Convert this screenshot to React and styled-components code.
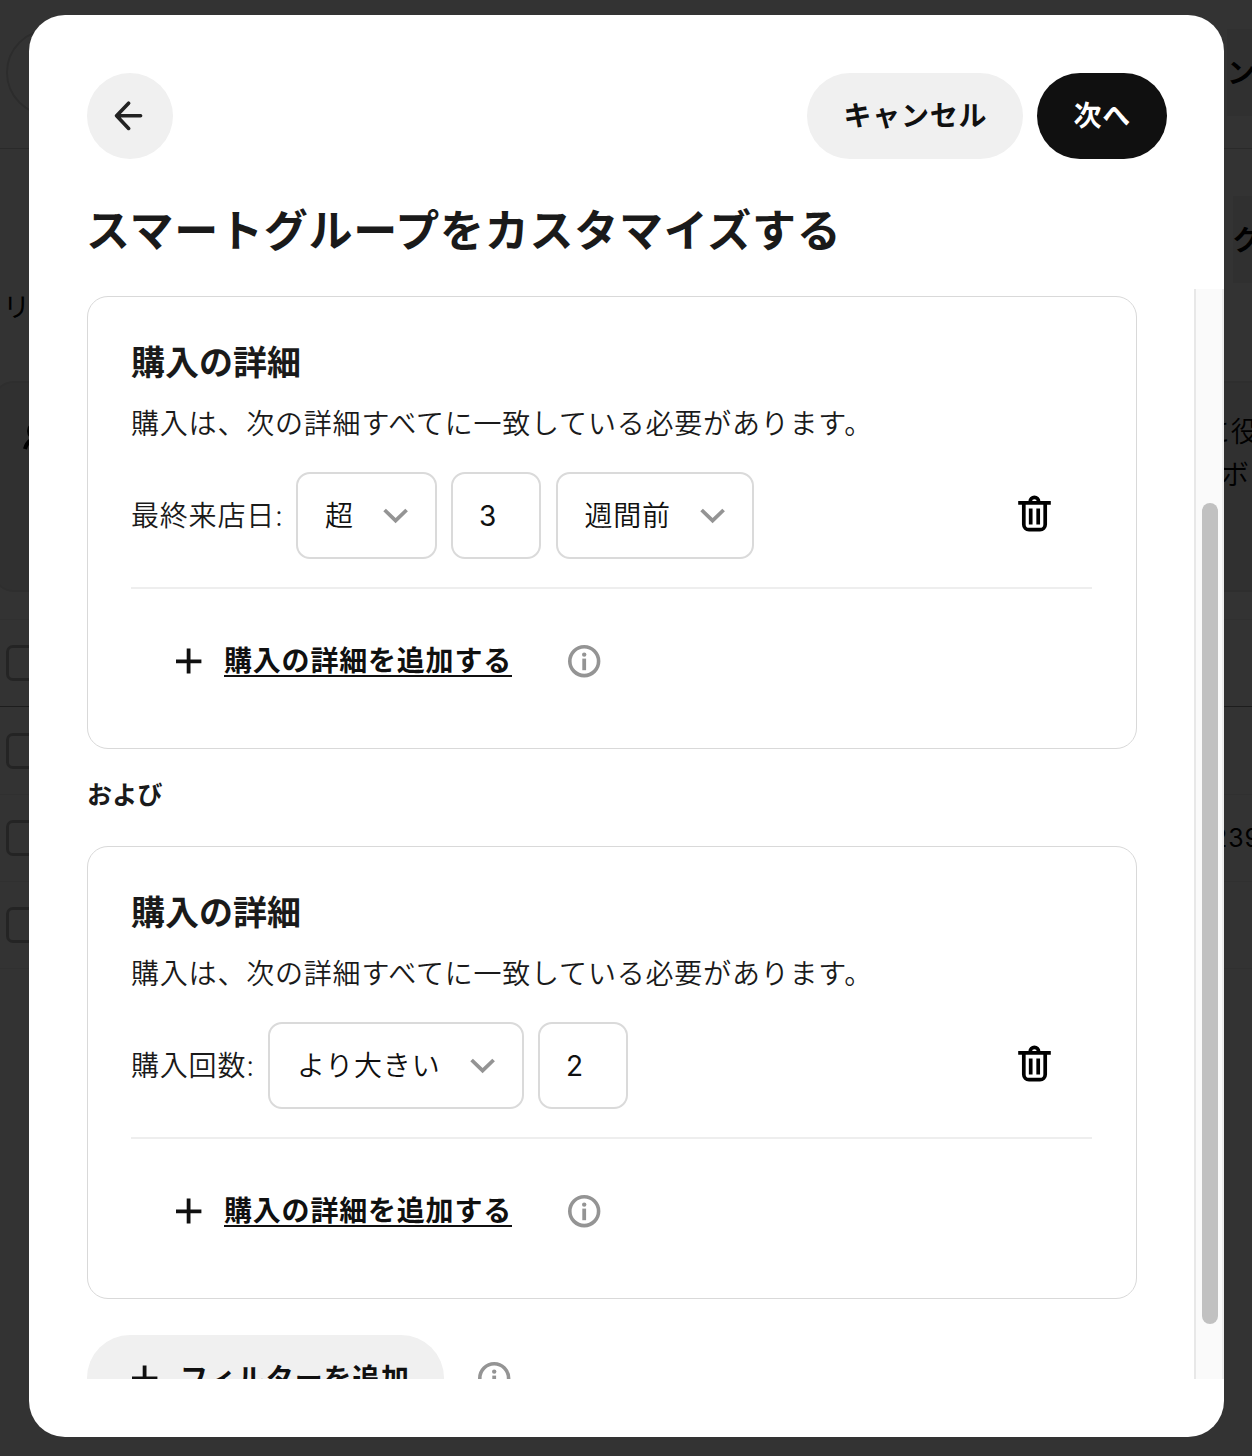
import styled, { createGlobalStyle } from 'styled-components'

const GlobalStyle = createGlobalStyle`
  * {
    box-sizing: border-box;
  }

  body {
    margin: 0;
    overflow: hidden;
    font-family: Inter, 'Noto Sans CJK JP', sans-serif;
    color: #1a1a1a;
  }

  button {
    border: 0;
    padding: 0;
    background: none;
    font: inherit;
    color: inherit;
  }
`

const Screen = styled.div`
  position: relative;
  width: 1252px;
  height: 1456px;
  overflow: hidden;
  background-color: #fff;
`

/* page behind the dialog */

const TopBar = styled.div`
  display: flex;
  align-items: center;
  justify-content: space-between;
  height: 149px;
  padding: 0 0 3px 6px;
  border-bottom: 1px solid #d0d0d0;
`

const RoundButton = styled.div`
  width: 87px;
  height: 87px;
  border: 2px solid #dadada;
  border-radius: 50%;
`

const EdgeButton = styled.div`
  display: flex;
  align-items: center;
  width: ${({ $width }) => $width}px;
  height: 87px;
  padding-bottom: 4px;
  overflow: hidden;
  background-color: #f0f0f0;
  font-size: 28px;
  font-weight: 700;
  white-space: nowrap;
  color: #000;
`

const ActionBar = styled.div`
  display: flex;
  justify-content: flex-end;
  padding: 47px 0 0;
`

const PageLabel = styled.div`
  margin: 3px 0 0 3px;
  font-size: 27px;
  line-height: 44px;
  color: #000;
`

const Banner = styled.div`
  display: flex;
  justify-content: space-between;
  height: 211px;
  margin: 51px -30px 0 -8px;
  padding: 28px 0 0 29px;
  border: 2px solid #e4e4e4;
  border-radius: 22px;
  background-color: #f0f0f0;
  color: #000;

  p {
    width: 78px;
    margin: 0;
    font-size: 28px;
    font-weight: 350;
    line-height: 43px;
    letter-spacing: 0.8px;
    white-space: nowrap;
  }

  span {
    display: block;
    padding-left: 19px;
  }
`

const PageRows = styled.div`
  margin-top: 27.4px;
  border-top: 1px solid #efefef;
`

const PageRow = styled.div`
  display: flex;
  align-items: center;
  justify-content: space-between;
  height: 87.1px;
  padding-left: 6px;
  border-bottom: 1px solid ${({ $head }) => ($head ? '#909090' : '#efefef')};

  span {
    width: 40px;
    font-size: 25px;
    letter-spacing: 0.9px;
    color: #000;
  }
`

const Checkbox = styled.div`
  width: 36px;
  height: 36px;
  border: 3px solid #b4b4b4;
  border-radius: 7px;
`

const Scrim = styled.div`
  position: absolute;
  inset: 0;
  background-color: rgba(0, 0, 0, 0.8);
`

/* dialog */

const Dialog = styled.section`
  position: absolute;
  top: 15px;
  left: 29px;
  display: flex;
  flex-direction: column;
  width: 1195px;
  height: 1422px;
  border-radius: 36px;
  overflow: hidden;
  background-color: #fff;
`

const Header = styled.header`
  padding: 58px 57px 0 58px;

  .actions {
    display: flex;
    gap: 14px;
  }

  h1 {
    margin: 39px 0 0 -1px;
    font-size: 44px;
    font-weight: 700;
    line-height: 66px;
    letter-spacing: 0.75px;
  }
`

const BackButton = styled.button`
  display: flex;
  align-items: center;
  justify-content: center;
  width: 86px;
  height: 86px;
  margin-right: auto;
  padding: 0 2px 1px 0;
  border-radius: 50%;
  background-color: #f0f0f0;
`

const Button = styled.button`
  display: flex;
  align-items: center;
  height: 86px;
  padding: 0 36px 4px;
  border-radius: 43px;
  background-color: ${({ $primary }) => ($primary ? '#101010' : '#f0f0f0')};
  font-size: 28px;
  font-weight: 700;
  letter-spacing: 0.8px;
  white-space: nowrap;
  color: ${({ $primary }) => ($primary ? '#fff' : '#101010')};
`

const FilterButton = styled(Button)`
  padding: 0 34px 3px 45px;

  svg {
    margin: 3px 22px 0 0;
  }
`

const Body = styled.div`
  display: flex;
  height: 1090px;
  margin-top: 25px;
  overflow: hidden;
`

const Content = styled.div`
  flex: 1;
  padding: 7px 57px 0 58px;
`

const ScrollTrack = styled.div`
  width: 30px;
  height: 1090px;
  padding: 214px 4px 0 6px;
  border-left: 2px solid #e8e8e8;
  border-right: 2px solid #ededed;
  background-color: #fafafa;
`

const ScrollThumb = styled.div`
  width: 16px;
  height: 821px;
  border-radius: 8px;
  background-color: #c1c1c1;
`

const Card = styled.article`
  height: 453px;
  padding: 44px 44px 0 43px;
  border: 1px solid #d9d9d9;
  border-radius: 21px;

  h2 {
    margin: 0;
    font-size: 34px;
    font-weight: 700;
    line-height: 44px;
  }

  p {
    margin: 17px 0 26px;
    font-size: 28px;
    font-weight: 350;
    line-height: 44px;
    letter-spacing: 0.8px;
  }
`

const Condition = styled.div`
  display: flex;
  align-items: center;
  gap: 14.5px;
  height: 117px;
  padding-bottom: 28px;
  border-bottom: 2px solid #eee;
  font-size: 28px;
  font-weight: 350;
  letter-spacing: 0.8px;
`

const Label = styled.label`
  width: ${({ $width }) => $width}px;
  padding-bottom: 4px;
  white-space: nowrap;
`

const Select = styled.div`
  display: flex;
  align-items: center;
  justify-content: space-between;
  width: ${({ $width }) => $width}px;
  height: 87px;
  padding: 0 26px 0 27px;
  border: 2px solid #dadada;
  border-radius: 14px;
  white-space: nowrap;
  color: #101010;

  span {
    padding-bottom: 4px;
  }
`

const NumberBox = styled.div`
  width: 90px;
  height: 87px;
  padding-left: 26px;
  border: 2px solid #dadada;
  border-radius: 14px;
  font-weight: 400;
  line-height: 84px;
  color: #101010;
`

const TrashButton = styled.button`
  height: 38px;
  margin: 0 41px 4px auto;
`

const AddRow = styled.div`
  display: flex;
  align-items: center;
  height: 86px;
  margin-top: 29px;
  padding-left: 45px;

  span {
    height: 32px;
    margin: 0 56px 0 22px;
    border-bottom: 2px solid #101010;
    font-size: 28px;
    font-weight: 700;
    line-height: 32px;
    letter-spacing: 0.8px;
    color: #101010;
  }
`

const Joiner = styled.div`
  padding: 28px 0 33px;
  font-size: 25px;
  font-weight: 700;
  line-height: 36px;
  letter-spacing: 0.2px;
`

const FilterRow = styled.div`
  display: flex;
  align-items: center;
  gap: 34px;
  margin-top: 36px;
`

const ArrowLeftIcon = () => (
  <svg width="30" height="30" viewBox="0 0 30 30" fill="none" stroke="#222" strokeWidth="3.6" strokeLinecap="round" strokeLinejoin="round">
    <path d="M14.6 2.2 2.6 14.8l12 12.6M3 14.8h23.6" />
  </svg>
)

const PlusIcon = () => (
  <svg width="26" height="26" viewBox="0 0 26 26" fill="none" stroke="#101010" strokeWidth="3.8">
    <path d="M12.6 .4v25.2M0 13.4h25.4" />
  </svg>
)

const ChevronIcon = () => (
  <svg width="26" height="18" viewBox="0 0 26 18" fill="none" stroke="#949494" strokeWidth="3.8">
    <path d="m1.6 3 11 10.6L23.6 3" />
  </svg>
)

const InfoIcon = () => (
  <svg width="33" height="33" viewBox="0 0 33 33" fill="none">
    <circle cx="16.2" cy="16.2" r="14.4" stroke="#949494" strokeWidth="3.6" />
    <circle cx="16.2" cy="9.6" r="2.2" fill="#949494" />
    <path d="M16.2 13.6v11.6" stroke="#949494" strokeWidth="3.8" />
  </svg>
)

const TrashIcon = () => (
  <svg width="33" height="38" viewBox="0 0 33 38" fill="none" stroke="#000" strokeWidth="3.7">
    <path d="M.2 7.8h32.6M12.2 7.8V6.6a4.2 4.2 0 0 1 8.4 0v1.2" />
    <path d="M5.8 8v21.4a5.2 5.2 0 0 0 5.2 5.2h11a5.2 5.2 0 0 0 5.2-5.2V8M12.7 13.4v16.2M20.2 13.4v16.2" />
  </svg>
)

const BannerIcon = () => (
  <svg width="44" height="44" viewBox="0 0 44 44" fill="none" stroke="#000" strokeWidth="4">
    <path d="M2 38C4 30 10 26 20 26s16 5 18 12" />
    <circle cx="14" cy="20" r="8" />
  </svg>
)

function PurchaseCard({ label, labelWidth, fields }) {
  return (
    <Card>
      <h2>購入の詳細</h2>
      <p>購入は、次の詳細すべてに一致している必要があります。</p>
      <Condition>
        <Label $width={labelWidth}>{label}</Label>
        {fields.map(({ value, width }) =>
          width ? (
            <Select key={value} $width={width}>
              <span>{value}</span>
              <ChevronIcon />
            </Select>
          ) : (
            <NumberBox key={value}>{value}</NumberBox>
          )
        )}
        <TrashButton>
          <TrashIcon />
        </TrashButton>
      </Condition>
      <AddRow>
        <PlusIcon />
        <span>購入の詳細を追加する</span>
        <InfoIcon />
      </AddRow>
    </Card>
  )
}

function BackgroundPage() {
  return (
    <>
      <TopBar>
        <RoundButton />
        <EdgeButton $width={25}>ン</EdgeButton>
      </TopBar>
      <ActionBar>
        <EdgeButton $width={19}>グ</EdgeButton>
      </ActionBar>
      <PageLabel>リ</PageLabel>
      <Banner>
        <BannerIcon />
        <p>
          に役
          <span>ボ</span>
        </p>
      </Banner>
      <PageRows>
        <PageRow $head>
          <Checkbox />
        </PageRow>
        <PageRow>
          <Checkbox />
        </PageRow>
        <PageRow>
          <Checkbox />
          <span>239</span>
        </PageRow>
        <PageRow>
          <Checkbox />
        </PageRow>
      </PageRows>
    </>
  )
}

export default function App() {
  return (
    <Screen>
      <GlobalStyle />
      <BackgroundPage />
      <Scrim />
      <Dialog>
        <Header>
          <div className="actions">
            <BackButton>
              <ArrowLeftIcon />
            </BackButton>
            <Button>キャンセル</Button>
            <Button $primary>次へ</Button>
          </div>
          <h1>スマートグループをカスタマイズする</h1>
        </Header>
        <Body>
          <Content>
            <PurchaseCard
              label="最終来店日:"
              labelWidth={150.5}
              fields={[{ value: '超', width: 140.5 }, { value: '3' }, { value: '週間前', width: 198 }]}
            />
            <Joiner>および</Joiner>
            <PurchaseCard
              label="購入回数:"
              labelWidth={122.5}
              fields={[{ value: 'より大きい', width: 255.5 }, { value: '2' }]}
            />
            <FilterRow>
              <FilterButton>
                <PlusIcon />
                フィルターを追加
              </FilterButton>
              <InfoIcon />
            </FilterRow>
          </Content>
          <ScrollTrack>
            <ScrollThumb />
          </ScrollTrack>
        </Body>
      </Dialog>
    </Screen>
  )
}
